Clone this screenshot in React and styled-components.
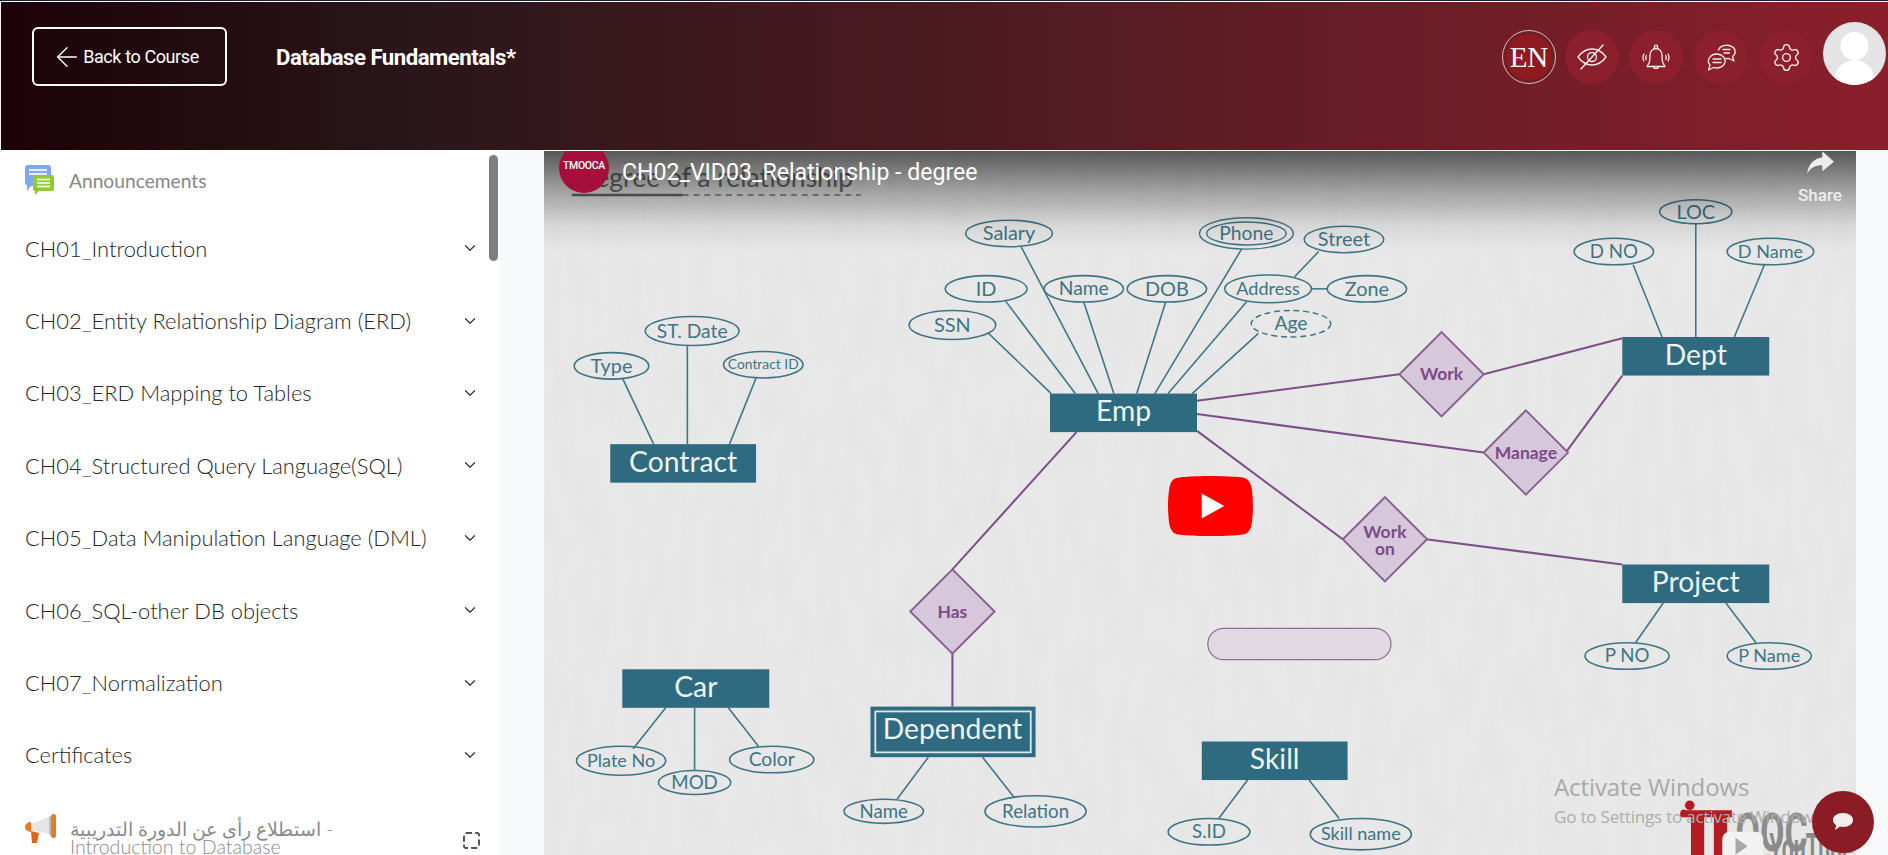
import React from "react";
import styled, { createGlobalStyle } from "styled-components";
import { ChevronDown, ArrowLeft, Settings } from "lucide-react";

const Global = createGlobalStyle`
  html, body { margin: 0; padding: 0; height: 100%; overflow: hidden; background: #fff; }
  * { box-sizing: border-box; }
`;
const SANS = `Lato, "DejaVu Sans", sans-serif`;

const Page = styled.div`
  width: 1888px; height: 855px; display: flex; flex-direction: column; overflow: hidden;
  border-top: 1px solid #1c2030; background: #f7f8fa; position: relative; font-family: ${SANS};
`;
const Header = styled.header`
  height: 150px; flex: none; display: flex; align-items: flex-start; padding: 25px 2px 0 31px;
  margin-left: 1px; border-top: 1px solid #fff;
  background: linear-gradient(90deg, #1c0206 0%, #2a161a 22%, #5a1c24 62%, #8a1f2b 100%);
  border-bottom: 1px solid #fff;
`;
const BackButton = styled.button`
  width: 195px; height: 59px; border: 2px solid #fff; border-radius: 6px; background: transparent; padding: 0 9px 0 0;
  color: #fff; font: 400 18px "Roboto", sans-serif; letter-spacing: -0.4px; display: flex; align-items: center; justify-content: center; gap: 0;
`;
const CourseTitle = styled.h1`
  margin: 0 0 0 49px; height: 59px; font: 700 22.2px/60px "Roboto", sans-serif; color: #fff; letter-spacing: -0.5px; flex: 1;
`;
const Actions = styled.div`display: flex; align-items: center; height: 52px; margin-top: 4px;`;
const Lang = styled.div`
  width: 54px; height: 54px; border-radius: 50%; border: 1px solid #d9bcbc; background: #8f1a22; box-shadow: inset 0 0 0 3px #6d2028;
  color: #fff; font: 400 29px/52px "Liberation Serif", serif; text-align: center; margin-right: 9px;
`;
const Round = styled.div`
  width: 54px; height: 54px; border-radius: 50%; background: #8b1f2b; display: flex; align-items: center; justify-content: center; margin-right: ${p => p.$gap}px;
`;
const Avatar = styled.div`
  width: 63px; height: 63px; border-radius: 50%; background: #e4e4e4; overflow: hidden; margin-left: 10px; margin-top: -8px; position: relative;
`;
const Body = styled.div`flex: 1; display: flex; min-height: 0;`;
const Sidebar = styled.aside`
  width: 500px; flex: none; background: #fff; position: relative; overflow: hidden; padding: 0 0 0 25px;
`;
const Thumb = styled.div`
  position: absolute; top: 4px; right: 2px; width: 9px; height: 106px; border-radius: 5px; background: #7f7f7f;
`;
const Announce = styled.div`
  height: 61px; padding-bottom: 3px; display: flex; align-items: center; gap: 14px; color: #868686; font-size: 19.2px; font-weight: 400;
`;
const Row = styled.div`
  height: 72.4px; display: flex; align-items: center; justify-content: space-between; color: #262626; font-size: 21.9px; font-weight: 300;
  padding-right: 21px;
`;
const Survey = styled.div`
  display: flex; align-items: flex-start; gap: 12px; padding: 22px 20px 0 0; color: #8a8a8a; font-size: 19.6px; font-weight: 300; line-height: 18px;
`;
const SurveyText = styled.div`flex: 1; margin-top: 7px;`;
const ArabicLine = styled.span`font-size: 18.7px;`;
const CheckBox = styled.div`width: 17px; height: 17px; margin-top: 19px; border: 2px dashed #555; border-radius: 3px; flex: none;`;
const Main = styled.main`flex: 1; min-width: 0; padding-left: 44px; overflow: hidden;`;
const Video = styled.section`
  width: 1312px; height: 738px; position: relative; background: #e6e6e6; overflow: hidden;
`;
const Diagram = styled.svg`display: block; position: absolute; inset: 0; width: 100%; height: 100%;`;
const Shade = styled.div`
  position: absolute; left: 0; right: 0; top: 0; height: 100px; background: linear-gradient(180deg, rgba(0,0,0,.62), rgba(0,0,0,.3) 40%, rgba(0,0,0,.07) 75%, rgba(0,0,0,0));
`;
const Logo = styled.div`
  position: absolute; left: 15px; top: -8px; width: 50px; height: 50px; border-radius: 50%; background: #a60f3c; color: #fff;
  font: 500 10.5px/46px "Roboto", sans-serif; text-align: center; letter-spacing: -.3px;
`;
const VideoTitle = styled.div`
  position: absolute; left: 78px; top: 7px; color: #fff; font: 400 23.1px/30px "Roboto", sans-serif; white-space: nowrap;
`;
const Share = styled.div`
  position: absolute; right: 13px; top: 0; width: 46px; color: #eee; font: 500 17px/20px "Roboto", sans-serif; text-align: center; display: flex; flex-direction: column; align-items: center; gap: 10px;
`;
const Play = styled.svg`position: absolute; left: 624px; top: 325px; width: 85px; height: 60px;`;
const Activate = styled.div`
  position: absolute; left: 1010px; top: 621px; color: #a8a8a8; font: 400 24px/30px "Open Sans", sans-serif; white-space: nowrap; letter-spacing: -.1px;
  small { display: block; font-size: 17px; line-height: 30px; color: #acacac; letter-spacing: -.2px; }
`;
const Chat = styled.div`
  position: absolute; left: 1812px; top: 790px; width: 62px; height: 62px; border-radius: 50%; background: #8a1c26; display: flex; align-items: center; justify-content: center; z-index: 3;
`;

const eS = "#3f7485";
const ellipses = [
  [838,194,36,11,"Salary",16.5],[1116,199,33,11,"Street",16.5],[819,240,34,11,"ID",16.5],[900,240,33,11,"Name",16],
  [969,240,33,11,"DOB",16.5],[1053,240,36,11.5,"Address",15],[1135,240,33,11,"Zone",16.5],[791,270,36,12,"SSN",16.5],
  [508,304,31,11,"Type",16.5],[575,275,39,12,"ST. Date",16],[634,303,33,11,"Contract ID",11.5],[1408,176,30,10,"LOC",16.5],
  [1340,209,33,11,"D NO",15.5],[1470,209,36,11,"D Name",15],[1351,545,35,11,"P NO",15.5],[1469,545,35,11,"P Name",15],
  [516,632,37,12,"Plate No",15],[577,650,30,10,"MOD",15.5],[641,631,35,11,"Color",16],[734,674,33,10,"Name",15.5],
  [860,674,42,13,"Relation",15.5],[1004,691,34,11,"S.ID",15.5],[1130,693,42,13,"Skill name",15],
];
const rects = [[507,369,121,32,"Contract"],[872,327,122,32,"Emp"],[1347,280,122,32,"Dept"],[1347,469,122,32,"Project"],[517,556,122,32,"Car"],[998,616,121,32,"Skill"]];
const diamonds = [[1197,311,"Work"],[1267,376,"Manage"],[1150,448,"Work|on"],[791,508,"Has"]];
const teal = [
  [820,276,873,327],[835,250,893,327],[848,205,912,327],[900,251,925,327],[968,251,944,327],[1031,207,959,327],[1035,251,970,327],[1045,277,990,327],
  [1095,209,1075,230],[1089,240,1102,240],[517,314,543,369],[571,287,571,369],[628,314,606,369],[1356,220,1380,280],[1408,186,1408,280],[1465,220,1440,280],
  [1381,501,1358,534],[1433,501,1458,534],[553,588,526,622],[577,588,577,640],[605,588,630,620],[771,629,745,664],[816,629,842,662],[1036,648,1012,680],[1087,648,1112,680],
];
const purple = [
  [994,333,1162,311],[1232,311,1347,281],[994,344,1232,376],[1300,376,1347,312],[994,358,1115,448],[1184,448,1347,469],[894,359,791,473],[791,543,791,587],
];
const DFONT = "Lato, sans-serif";

function ErDiagram() {
  return (
    <Diagram viewBox="452 125.500 1089 613" preserveAspectRatio="none">
      <defs>
        <filter id="paper" x="0" y="0" width="100%" height="100%">
          <feTurbulence type="fractalNoise" baseFrequency="0.09 0.02" numOctaves="3" seed="4" />
          <feColorMatrix values="0 0 0 0 0.5  0 0 0 0 0.5  0 0 0 0 0.5  0.5 0.5 0 0 -0.42" />
        </filter>
      </defs>
      <rect x="452" y="125" width="1089" height="615" fill="#e8e8e8" />
      <rect x="452" y="125" width="1089" height="615" filter="url(#paper)" opacity=".18" />
      <text x="478" y="155" fontFamily={DFONT} fontSize="22" fill="#6a6a6a">Degree of a relationship</text>
      <line x1="475" y1="162" x2="567" y2="162" stroke="#666" strokeWidth="2" />
      <line x1="567" y1="162" x2="715" y2="162" stroke="#777" strokeWidth="1.2" strokeDasharray="5 4" />
      {teal.map((l, i) => <line key={i} x1={l[0]} y1={l[1]} x2={l[2]} y2={l[3]} stroke={eS} strokeWidth="1.3" />)}
      {purple.map((l, i) => <line key={i} x1={l[0]} y1={l[1]} x2={l[2]} y2={l[3]} stroke="#7d4f88" strokeWidth="1.7" />)}
      <ellipse cx="1035" cy="194" rx="39" ry="13" fill="none" stroke={eS} strokeWidth="1.2" />
      <ellipse cx="1035" cy="194" rx="33" ry="9.5" fill="none" stroke={eS} strokeWidth="1.2" />
      <text x="1035" y="199.500" textAnchor="middle" fontFamily={DFONT} fontSize="16" fill={eS}>Phone</text>
      <ellipse cx="1072" cy="269" rx="33" ry="11" fill="none" stroke={eS} strokeWidth="1.2" strokeDasharray="5 3" />
      <text x="1072" y="274.500" textAnchor="middle" fontFamily={DFONT} fontSize="16" fill={eS}>Age</text>
      {ellipses.map((e, i) => (
        <g key={i}>
          <ellipse cx={e[0]} cy={e[1]} rx={e[2]} ry={e[3]} fill="none" stroke={eS} strokeWidth="1.3" />
          <text x={e[0]} y={e[1] + e[5] * 0.34} textAnchor="middle" fontFamily={DFONT} fontSize={e[5]} fill={eS}>{e[4]}</text>
        </g>
      ))}
      {rects.map((r, i) => (
        <g key={i}>
          <rect x={r[0]} y={r[1]} width={r[2]} height={r[3]} fill="#2e6a80" />
          <text x={r[0] + r[2] / 2} y={r[1] + 23} textAnchor="middle" fontFamily={DFONT} fontSize="23.500" fill="#eef5f7">{r[4]}</text>
        </g>
      ))}
      <rect x="723" y="587" width="137" height="42" fill="#2e6a80" />
      <rect x="727" y="591" width="129" height="34" fill="#2e6a80" stroke="#dce8ec" strokeWidth="1.5" />
      <text x="791" y="614" textAnchor="middle" fontFamily={DFONT} fontSize="23.500" fill="#eef5f7">Dependent</text>
      {diamonds.map((d, i) => {
        const [a, b] = d[2].split("|");
        return (
          <g key={i}>
            <polygon points={`${d[0]},${d[1]-35} ${d[0]+35},${d[1]} ${d[0]},${d[1]+35} ${d[0]-35},${d[1]}`} fill="#d6c8da" stroke="#86608f" strokeWidth="1.6" />
            {b ? (
              <>
                <text x={d[0]} y={d[1] - 1} textAnchor="middle" fontFamily={DFONT} fontWeight="700" fontSize="14.5" fill="#7b4a88">{a}</text>
                <text x={d[0]} y={d[1] + 13} textAnchor="middle" fontFamily={DFONT} fontWeight="700" fontSize="14.5" fill="#7b4a88">{b}</text>
              </>
            ) : (
              <text x={d[0]} y={d[1] + 5} textAnchor="middle" fontFamily={DFONT} fontWeight="700" fontSize="14.5" fill="#7b4a88">{a}</text>
            )}
          </g>
        );
      })}
      <rect x="1003" y="522" width="152" height="26" rx="13" fill="#e2d8e4" stroke="#8c6c95" strokeWidth="1" />
      {/* channel watermark: red IT mark, grey letters, YouTube badge */}
      <g fill="#b41c24">
        <circle cx="1403" cy="669" r="4" />
        <path d="M1395 677 q0 -6 5 -4 h38 v6 h-4 v62 h-11 v-62 h-8 v62 h-11 v-62 h-9 Z" />
      </g>
      <text x="1441" y="707" fontFamily="Roboto, sans-serif" fontWeight="700" fontSize="44" fill="#8c8c8c" textLength="60" lengthAdjust="spacingAndGlyphs">OOC</text>
      <rect x="1430" y="691" width="34" height="50" rx="6" fill="#f2f2f2" />
      <polygon points="1441,696 1451,703 1441,710" fill="#a8a8a8" />
      <text x="1469" y="716" fontFamily="Roboto, sans-serif" fontWeight="700" fontSize="34" fill="#8a8a8a" textLength="70" lengthAdjust="spacingAndGlyphs">YouTube</text>
    </Diagram>
  );
}

const Ic = ({ children, s = 32 }) => (
  <svg width={s} height={s} viewBox="0 0 32 32" fill="none" stroke="#f8eaea" strokeWidth="1.3" strokeLinecap="round" strokeLinejoin="round">{children}</svg>
);

function Announcements() {
  return (
    <svg width="30" height="30" viewBox="0 0 30 30" style={{ flex: "none" }}>
      <path d="M0 3 a3 3 0 0 1 3-3 h20 a3 3 0 0 1 3 3 v15 a3 3 0 0 1-3 3 H6 l-4 5 v-5.500 a3 3 0 0 1-2-3 Z" fill="#7fa9ec" />
      <rect x="4" y="4" width="18" height="2" fill="#e3edfc" /><rect x="4" y="8" width="18" height="2" fill="#e3edfc" />
      <path d="M8 12 a2 2 0 0 1 2-2 h17 a2 2 0 0 1 2 2 v12 a2 2 0 0 1-2 2 H14 l-4 4 v-4 a2 2 0 0 1-2-2 Z" fill="#8fc93a" />
      <rect x="12" y="13.500" width="13" height="2" fill="#e6f4c8" /><rect x="12" y="17" width="13" height="2" fill="#e6f4c8" /><rect x="12" y="20.500" width="13" height="2" fill="#e6f4c8" />
    </svg>
  );
}
function Megaphone() {
  return (
    <svg width="33" height="30" viewBox="0 0 33 30" style={{ flex: "none" }}>
      <path d="M6 11 L24 4 V21 L6 17 Z" fill="#e5e5e5" />
      <rect x="26" y="1" width="5" height="24" rx="2.500" fill="#ea7a1e" />
      <path d="M24 4 L26 3 V23 L24 21 Z" fill="#bdbdbd" />
      <path d="M6 9 a6 5 0 0 0 0 10 Z" fill="#ea7a1e" />
      <path d="M6 18 L14 20 L12 30 H7 Z" fill="#d9641a" />
    </svg>
  );
}

const rows = [
  "CH01_Introduction","CH02_Entity Relationship Diagram (ERD)","CH03_ERD Mapping to Tables","CH04_Structured Query Language(SQL)",
  "CH05_Data Manipulation Language (DML)","CH06_SQL-other DB objects","CH07_Normalization","Certificates",
];

export default function App() {
  return (
    <Page>
      <Global />
      <Header>
        <BackButton><ArrowLeft size={32} strokeWidth={1} />Back to Course</BackButton>
        <CourseTitle>Database Fundamentals*</CourseTitle>
        <Actions>
          <Lang>EN</Lang>
          <Round $gap={10}>
            <Ic>
              <path d="M2 16 C7 9 11.500 8 16 8 s9 1 14 8 c-5 7-9.500 8-14 8 s-9-1-14-8 Z" />
              <circle cx="16" cy="16" r="4.500" />
              <path d="M5 28 L27 4" strokeWidth="1.500" />
            </Ic>
          </Round>
          <Round $gap={11}>
            <Ic>
              <path d="M8.500 23 c1.500-2 1.500-5 1.500-9 a6 6.500 0 0 1 12 0 c0 4 0 7 1.500 9 l1.500 2.500 H7 Z" />
              <circle cx="16" cy="5.800" r="1.700" />
              <path d="M13.500 25.500 a2.500 2 0 0 0 5 0" />
              <path d="M4 13 c-1.200 2-1.200 5 0 7 M6.300 14.500 c-.7 1.200-.7 2.800 0 4 M28 13 c1.200 2 1.200 5 0 7 M25.700 14.500 c.7 1.200.7 2.800 0 4" />
            </Ic>
          </Round>
          <Round $gap={11}>
            <Ic>
              <path d="M13.500 9 A8.500 6.500 0 1 1 27.500 15.500 L29 20 L24 17.500 A8.500 6.500 0 0 1 21 17.500" />
              <path d="M18 8.500 h7 M19 12 h5.500" />
              <path d="M12 13 a8.500 7 0 1 1 -3.500 13.500 L3.500 29 L5 24 A8.500 7 0 0 1 12 13 Z" />
              <path d="M8 18 h8 M8 21.500 h8" />
            </Ic>
          </Round>
          <Round $gap={0}><Settings size={31} color="#f8eaea" strokeWidth={1.1} /></Round>
          <Avatar>
            <svg width="63" height="63" viewBox="0 0 63 63">
              <circle cx="31.500" cy="24" r="14" fill="#fff" />
              <path d="M10 63 C11 46 21 38 31.500 38 S52 46 53 63 Z" fill="#fff" />
            </svg>
          </Avatar>
        </Actions>
      </Header>
      <Body>
        <Sidebar>
          <Thumb />
          <Announce><Announcements />Announcements</Announce>
          {rows.map(r => (
            <Row key={r}>{r}<ChevronDown size={18} strokeWidth={1.6} color="#333" /></Row>
          ))}
          <Survey>
            <Megaphone />
            <SurveyText><ArabicLine>استطلاع رأى عن الدورة التدريبية -</ArabicLine><br />Introduction to Database</SurveyText>
            <CheckBox />
          </Survey>
        </Sidebar>
        <Main>
          <Video>
            <ErDiagram />
            <Shade />
            <Logo>TMOOCA</Logo>
            <VideoTitle>CH02_VID03_Relationship - degree</VideoTitle>
            <Share>
              <svg width="28" height="24" viewBox="0 0 24 20" fill="#eee"><path d="M14 0 L24 9 L14 17 V12 C8 12 4 14 1 19 C2 11 7 6 14 5 Z" /></svg>
              Share
            </Share>
            <Play viewBox="0 0 68 48">
              <path d="M66.500 7.700c-.8-2.900-2.500-5.400-5.400-6.200C55.800.1 34 0 34 0S12.200.1 6.900 1.600c-3 .7-4.600 3.200-5.400 6.100C.1 13 0 24 0 24s.1 11 1.500 16.300c.8 2.900 2.500 5.400 5.400 6.200C12.200 47.900 34 48 34 48s21.800-.1 27.100-1.500c2.900-.8 4.600-3.300 5.400-6.200C67.900 35 68 24 68 24s-.1-11-1.500-16.300z" fill="#f00" />
              <path d="M45 24 27 14v20" fill="#fff" />
            </Play>
            <Activate>Activate Windows<small>Go to Settings to activate Windows.</small></Activate>
          </Video>
        </Main>
      </Body>
      <Chat>
        <svg width="24" height="22" viewBox="0 0 24 22" fill="#f4eeee">
          <path d="M12 2 C18 2 22 5 22 9 C22 13 18 16 12 16 C10.800 16 9.800 15.900 8.800 15.600 C7.500 17 5.500 18.500 3.500 19 C4.500 17.500 5 16 5 14 C3 12.800 2 11 2 9 C2 5 6 2 12 2 Z" />
        </svg>
      </Chat>
    </Page>
  );
}
